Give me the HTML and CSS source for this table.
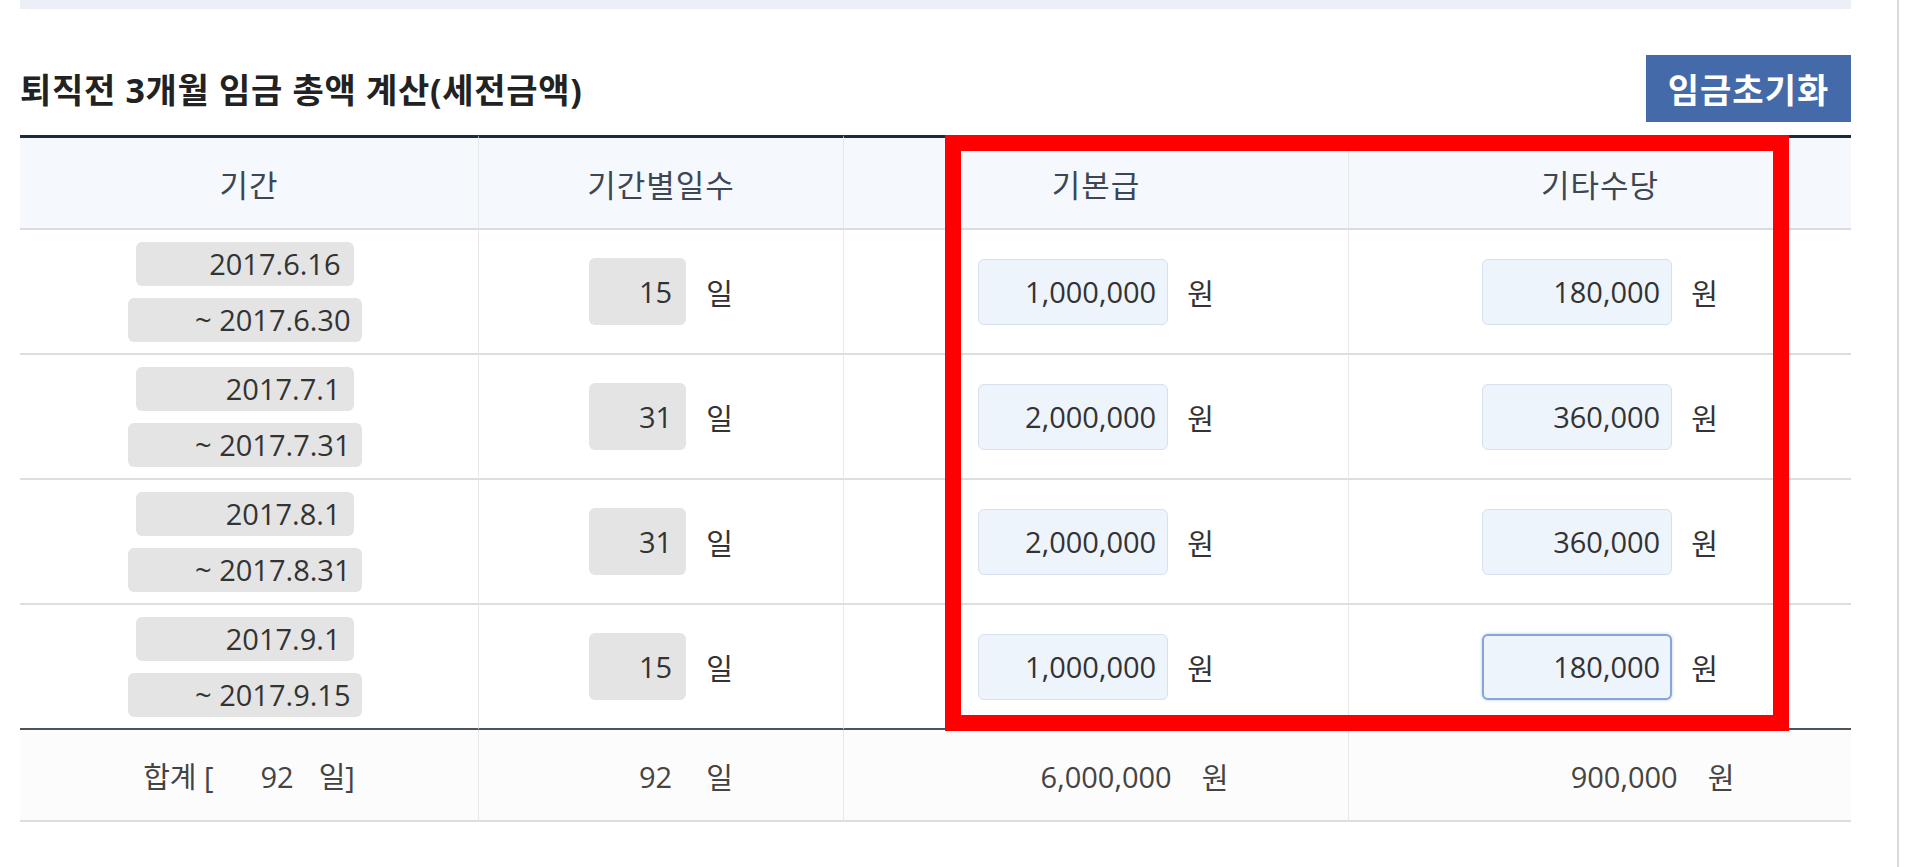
FILE: index.html
```html
<!DOCTYPE html>
<html lang="ko">
<head>
    <meta charset="UTF-8">
    <meta name="viewport" content="width=device-width, initial-scale=1.0">
    <title>퇴직금 계산</title>
    <link rel="stylesheet" href="styles.css">
</head>
<body>
    <div class="page">
        <div class="prev-box"></div>

        <div class="section-head">
            <h3 class="section-title">퇴직전 3개월 임금 총액 계산(세전금액)</h3>
            <button class="btn-reset" type="button">임금초기화</button>
        </div>

        <div class="table-wrap">
            <table class="wage-table">
                <colgroup>
                    <col style="width: 458px">
                    <col style="width: 365px">
                    <col style="width: 505px">
                    <col style="width: 503px">
                </colgroup>
                <thead>
                    <tr>
                        <th>기간</th>
                        <th>기간별일수</th>
                        <th>기본급</th>
                        <th>기타수당</th>
                    </tr>
                </thead>
                <tbody>
                    <tr>
                        <td class="cell-period">
                            <div class="period">
                                <input class="date-box" type="text" value="2017.6.16" readonly>
                                <input class="date-box date-to" type="text" value="~ 2017.6.30" readonly>
                            </div>
                        </td>
                        <td><input class="day-box" type="text" value="15" readonly><span class="unit unit-day">일</span></td>
                        <td><input class="money-box" type="text" value="1,000,000"><span class="unit">원</span></td>
                        <td><input class="money-box" type="text" value="180,000"><span class="unit">원</span></td>
                    </tr>
                    <tr>
                        <td class="cell-period">
                            <div class="period">
                                <input class="date-box" type="text" value="2017.7.1" readonly>
                                <input class="date-box date-to" type="text" value="~ 2017.7.31" readonly>
                            </div>
                        </td>
                        <td><input class="day-box" type="text" value="31" readonly><span class="unit unit-day">일</span></td>
                        <td><input class="money-box" type="text" value="2,000,000"><span class="unit">원</span></td>
                        <td><input class="money-box" type="text" value="360,000"><span class="unit">원</span></td>
                    </tr>
                    <tr>
                        <td class="cell-period">
                            <div class="period">
                                <input class="date-box" type="text" value="2017.8.1" readonly>
                                <input class="date-box date-to" type="text" value="~ 2017.8.31" readonly>
                            </div>
                        </td>
                        <td><input class="day-box" type="text" value="31" readonly><span class="unit unit-day">일</span></td>
                        <td><input class="money-box" type="text" value="2,000,000"><span class="unit">원</span></td>
                        <td><input class="money-box" type="text" value="360,000"><span class="unit">원</span></td>
                    </tr>
                    <tr class="last-row">
                        <td class="cell-period">
                            <div class="period">
                                <input class="date-box" type="text" value="2017.9.1" readonly>
                                <input class="date-box date-to" type="text" value="~ 2017.9.15" readonly>
                            </div>
                        </td>
                        <td><input class="day-box" type="text" value="15" readonly><span class="unit unit-day">일</span></td>
                        <td><input class="money-box" type="text" value="1,000,000"><span class="unit">원</span></td>
                        <td><input class="money-box is-focus" type="text" value="180,000"><span class="unit">원</span></td>
                    </tr>
                </tbody>
                <tfoot>
                    <tr>
                        <td>
                            <span class="sum-label">합계 [</span><span class="sum-days">92</span><span class="sum-unit">일]</span>
                        </td>
                        <td><span class="total-days">92</span><span class="unit unit-day">일</span></td>
                        <td class="cell-total"><span class="total-amount">6,000,000</span><span class="unit unit-total">원</span></td>
                        <td class="cell-total cell-total-last"><span class="total-amount">900,000</span><span class="unit unit-total">원</span></td>
                    </tr>
                </tfoot>
            </table>
            <!-- 강조 표시 -->
            <div class="highlight-box"></div>
        </div>
    </div>
</body>
</html>
```

FILE: styles.css
```css
body {
    margin: 0;
    font-family: "Open Sans", "Noto Sans CJK KR", sans-serif;
    color: #333;
    background: #fff;
}
.page {
    width: 1899px;
    min-height: 867px;
    box-sizing: border-box;
    padding: 0 46px 0 20px;
    border-right: 2px solid #d9d9d9;
}
.prev-box {
    height: 9px;
    background-color: #eceef8;
}
.section-head {
    display: flex;
    align-items: center;
    justify-content: space-between;
    height: 67px;
    margin-top: 46px;
}
.section-title {
    margin: 0;
    font-size: 34px;
    font-weight: 700;
    letter-spacing: 0.7px;
    color: #222;
}
.btn-reset {
    width: 205px;
    height: 67px;
    padding: 0;
    border: none;
    background-color: #456aa9;
    color: #fff;
    font-family: "Noto Sans CJK KR", sans-serif;
    font-size: 34px;
    font-weight: 700;
    letter-spacing: 1px;
    cursor: pointer;
}
.table-wrap {
    position: relative;
    margin-top: 13px;
}
.wage-table {
    width: 100%;
    table-layout: fixed;
    border-collapse: separate;
    border-spacing: 0;
}
.wage-table th,
.wage-table td {
    box-sizing: border-box;
    padding: 0;
    text-align: center;
    vertical-align: middle;
    white-space: nowrap;
}
.wage-table th + th,
.wage-table td + td {
    border-left: 1px solid #e8e8e8;
}
.wage-table th {
    height: 95px;
    border-top: 3px solid #1b2a44;
    border-bottom: 2px solid #dcdcdc;
    background-color: #f5f8fc;
    font-family: "Noto Sans CJK KR", sans-serif;
    font-size: 31px;
    font-weight: 400;
    letter-spacing: 1px;
    color: #3d4753;
}
.wage-table tbody td {
    height: 125px;
    border-bottom: 2px solid #dedede;
}
.wage-table tbody .last-row td {
    border-bottom: 2px solid #4c545c;
}
.wage-table tfoot td {
    height: 92px;
    border-bottom: 2px solid #dedede;
    background-color: #fcfcfc;
    font-size: 29px;
    color: #444;
}
.wage-table input {
    box-sizing: border-box;
    font-family: inherit;
    font-size: 29px;
    color: #333;
    text-align: right;
    outline: none;
    vertical-align: middle;
}
.cell-period {
    padding-right: 9px !important;
}
.period {
    display: flex;
    flex-direction: column;
    align-items: center;
    gap: 12px;
}
.date-box {
    width: 218px;
    height: 44px;
    padding: 0 13px 0 0;
    border: none;
    border-radius: 6px;
    background-color: #e4e4e4;
}
.date-box.date-to {
    width: 234px;
    padding-right: 11px;
}
.day-box {
    width: 97px;
    height: 67px;
    padding: 0 14px 0 0;
    border: none;
    border-radius: 6px;
    background-color: #e4e4e4;
}
.money-box {
    width: 190px;
    height: 66px;
    padding: 0 11px 0 0;
    border: 1px solid #d6e0ee;
    border-radius: 6px;
    background-color: #eef4fc;
}
.money-box.is-focus {
    border: 2px solid #86a7d6;
    padding-right: 10px;
    box-shadow: 0 0 3px rgba(90, 135, 200, 0.5);
}
.unit {
    display: inline-block;
    margin-left: 19px;
    font-family: "Noto Sans CJK KR", sans-serif;
    font-size: 29px;
    vertical-align: middle;
}
.unit-day {
    margin-left: 20px;
}
.sum-label,
.sum-unit {
    font-family: "Open Sans", "Noto Sans CJK KR", sans-serif;
}
.sum-days {
    margin-left: 47px;
}
.sum-unit {
    margin-left: 25px;
}
.total-days {
    display: inline-block;
    width: 97px;
    padding-right: 14px;
    box-sizing: border-box;
    text-align: right;
    vertical-align: middle;
}
.cell-total {
    padding-left: 18px !important;
}
.cell-total-last {
    padding-left: 22px !important;
}
.unit-total {
    margin-left: 30px;
}
.total-amount {
    display: inline-block;
    width: 190px;
    text-align: right;
    vertical-align: middle;
}
.highlight-box {
    position: absolute;
    left: 925px;
    top: 0;
    width: 844px;
    height: 596px;
    box-sizing: border-box;
    border: 16px solid #ff0000;
    pointer-events: none;
}
```
